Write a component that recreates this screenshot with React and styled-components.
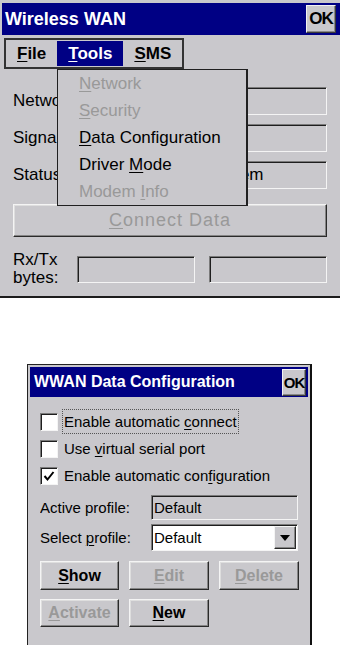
import React from 'react';
import styled, { createGlobalStyle } from 'styled-components';

const GRAY = '#c9c8cc';
const NAVY = '#000084';
const DISABLED = '#999999';

const GlobalStyle = createGlobalStyle`
  html, body {
    margin: 0;
    padding: 0;
    background: #fff;
  }
  body {
    font-family: "Liberation Sans", Arial, sans-serif;
    color: #000;
  }
  #root {
    width: 340px;
    height: 645px;
    overflow: hidden;
  }
`;

const Screen = styled.div`
  width: 340px;
  height: 645px;
  display: flex;
  flex-direction: column;
  background: #fff;
`;

const MainWindow = styled.div`
  position: relative;
  box-sizing: border-box;
  height: 298px;
  padding: 3px 0 0 2px;
  background: ${GRAY};
  border-bottom: 2px solid #1c1c1c;
  display: flex;
  flex-direction: column;
`;

const DialogWindow = styled.div`
  box-sizing: border-box;
  flex: 1;
  width: 285px;
  margin: 66px 0 0 27px;
  padding: 2px 2px 0 2px;
  background: ${GRAY};
  border-left: 1px solid #222;
  border-top: 1px solid #222;
  border-right: 2px solid #111;
  display: flex;
  flex-direction: column;
`;

const TitleBar = styled.div`
  display: flex;
  align-items: center;
  justify-content: space-between;
  flex-shrink: 0;
  height: ${p => p.$h}px;
  padding: ${p => p.$pad};
  background: ${NAVY};
  color: #fff;
  font-weight: bold;
  font-size: ${p => p.$size}px;
`;

const OkButton = styled.div`
  box-sizing: border-box;
  width: ${p => p.$w}px;
  height: ${p => p.$h}px;
  display: flex;
  align-items: center;
  justify-content: center;
  background: ${GRAY};
  color: #000;
  border: 1px solid;
  border-color: #f2f2f2 #3a3a3a #3a3a3a #f2f2f2;
  box-shadow: inset -1px -1px 0 #8a8a8a;
  font-weight: bold;
  font-size: ${p => p.$size}px;
  letter-spacing: -1px;
`;

const MenuBar = styled.div`
  align-self: flex-start;
  box-sizing: border-box;
  display: flex;
  align-items: center;
  height: 31px;
  margin: 3px 0 0 2px;
  border: 2px solid #333;
  font-weight: bold;
  font-size: 17px;
`;

const MenuItem = styled.div`
  height: 25px;
  display: flex;
  align-items: center;
  padding: 0 11px;
  background: ${p => (p.$active ? NAVY : 'transparent')};
  color: ${p => (p.$active ? '#fff' : '#000')};
`;

const Key = styled.span`
  text-decoration: underline;
  text-underline-offset: 2px;
  text-decoration-thickness: 1px;
`;

const Dropdown = styled.div`
  position: absolute;
  left: 57px;
  top: 69px;
  width: 191px;
  box-sizing: border-box;
  background: ${GRAY};
  border: 1px solid #202020;
  border-right-width: 2px;
  z-index: 5;
`;

const DropItem = styled.div`
  height: 27px;
  display: flex;
  align-items: center;
  padding-left: 21px;
  font-size: 17px;
  color: ${p => (p.$disabled ? DISABLED : '#000')};
`;

const Form = styled.div`
  display: flex;
  flex-direction: column;
  margin-top: 18px;
  padding: 0 13px 0 11px;
`;

const Fields = styled.div`
  display: flex;
  flex-direction: column;
  gap: 9px;
`;

const FieldRow = styled.div`
  display: flex;
  align-items: center;
  height: 28px;
`;

const FieldLabel = styled.div`
  width: ${p => p.$w}px;
  flex-shrink: 0;
  font-size: ${p => p.$size}px;
  white-space: nowrap;
  overflow: hidden;
`;

const TextBox = styled.div`
  box-sizing: border-box;
  flex: ${p => (p.$w ? 'none' : 1)};
  width: ${p => (p.$w ? `${p.$w}px` : 'auto')};
  height: ${p => p.$h}px;
  display: flex;
  align-items: center;
  padding-left: ${p => p.$pl || 3}px;
  background: ${p => (p.$white ? '#fff' : GRAY)};
  border: 1px solid;
  border-color: #7a7a7a #f4f4f4 #f4f4f4 #7a7a7a;
  box-shadow: inset 1px 1px 0 #1e1e1e;
  font-size: ${p => p.$size}px;
  white-space: nowrap;
  overflow: hidden;
`;

const RaisedButton = styled.div`
  box-sizing: border-box;
  height: ${p => p.$h}px;
  display: flex;
  align-items: center;
  justify-content: center;
  background: ${GRAY};
  border: 1px solid;
  border-color: #f4f4f4 #2a2a2a #2a2a2a #f4f4f4;
  box-shadow: inset -1px -1px 0 #858585, inset 1px 1px 0 #dedede;
  color: ${p => (p.$disabled ? DISABLED : '#000')};
  font-size: ${p => p.$size}px;
  font-weight: ${p => (p.$bold ? 'bold' : 'normal')};
  letter-spacing: ${p => p.$ls || 0}px;
`;

const ConnectWrap = styled.div`
  margin-top: 15px;
`;

const RxRow = styled.div`
  display: flex;
  align-items: center;
  margin-top: 14px;
  gap: 14px;
`;

const RxLabel = styled.div`
  width: 50px;
  font-size: 17px;
  line-height: 18px;
`;

const DialogBody = styled.div`
  display: flex;
  flex-direction: column;
  padding: 0 9px 0 10px;
`;

const CheckList = styled.div`
  display: flex;
  flex-direction: column;
  margin-top: 11px;
`;

const CheckRow = styled.div`
  display: flex;
  align-items: center;
  height: 27px;
  gap: 4px;
`;

const CheckBox = styled.div`
  box-sizing: border-box;
  width: 18px;
  height: 18px;
  display: flex;
  align-items: center;
  justify-content: center;
  background: #fff;
  border: 1px solid;
  border-color: #7a7a7a #f4f4f4 #f4f4f4 #7a7a7a;
  box-shadow: inset 1px 1px 0 #1e1e1e;
`;

const CheckText = styled.span`
  font-size: 15px;
  padding: 3px 1px;
  border: 1px dotted ${p => (p.$focus ? '#555' : 'transparent')};
`;

const ProfileRow = styled.div`
  display: flex;
  align-items: center;
  margin-top: ${p => p.$mt}px;
`;

const ComboArrow = styled.div`
  box-sizing: border-box;
  width: 22px;
  height: 23px;
  margin: 0 1px 0 auto;
  display: flex;
  align-items: center;
  justify-content: center;
  background: ${GRAY};
  border: 1px solid;
  border-color: #f4f4f4 #2a2a2a #2a2a2a #f4f4f4;
  box-shadow: inset -1px -1px 0 #858585;
`;

const ButtonGrid = styled.div`
  display: grid;
  grid-template-columns: 79px 80px 80px;
  grid-template-rows: 29px 28px;
  column-gap: 10px;
  row-gap: 9px;
  margin-top: 10px;
`;

const CheckMark = () => (
  <svg width="12" height="12" viewBox="0 0 12 12">
    <polyline points="1.5,6 4.5,9.5 10.5,2" fill="none" stroke="#000" strokeWidth="2" />
  </svg>
);

const DownArrow = () => (
  <svg width="10" height="6" viewBox="0 0 10 6">
    <polygon points="0,0 10,0 5,6" fill="#000" />
  </svg>
);

export default function App() {
  return (
    <>
      <GlobalStyle />
      <Screen>
        <MainWindow>
          <TitleBar $h={32} $pad="0 4px 0 3px" $size={18}>
            <span>Wireless WAN</span>
            <OkButton $w={30} $h={28} $size={17}>OK</OkButton>
          </TitleBar>

          <MenuBar>
            <MenuItem><span><Key>F</Key>ile</span></MenuItem>
            <MenuItem $active><span><Key>T</Key>ools</span></MenuItem>
            <MenuItem><span><Key>S</Key>MS</span></MenuItem>
          </MenuBar>

          <Form>
            <Fields>
              <FieldRow>
                <FieldLabel $w={83} $size={17}>Network:</FieldLabel>
                <TextBox $h={28} $size={17} />
              </FieldRow>
              <FieldRow>
                <FieldLabel $w={83} $size={17}>Signal:</FieldLabel>
                <TextBox $h={28} $size={17} />
              </FieldRow>
              <FieldRow>
                <FieldLabel $w={83} $size={17}>Status:</FieldLabel>
                <TextBox $h={28} $size={17} $pl={4}>Searching for modem</TextBox>
              </FieldRow>
            </Fields>

            <ConnectWrap>
              <RaisedButton $h={33} $size={18} $ls={1} $disabled>
                <span><Key>C</Key>onnect Data</span>
              </RaisedButton>
            </ConnectWrap>

            <RxRow>
              <RxLabel>Rx/Tx<br />bytes:</RxLabel>
              <TextBox $w={118} $h={27} $size={17} />
              <TextBox $w={118} $h={27} $size={17} />
            </RxRow>
          </Form>

          <Dropdown>
            <DropItem $disabled><span><Key>N</Key>etwork</span></DropItem>
            <DropItem $disabled><span><Key>S</Key>ecurity</span></DropItem>
            <DropItem><span><Key>D</Key>ata Configuration</span></DropItem>
            <DropItem><span>Driver <Key>M</Key>ode</span></DropItem>
            <DropItem $disabled><span>Modem <Key>I</Key>nfo</span></DropItem>
          </Dropdown>
        </MainWindow>

        <DialogWindow>
          <TitleBar $h={30} $pad="0 2px 0 4px" $size={16}>
            <span>WWAN Data Configuration</span>
            <OkButton $w={24} $h={27} $size={15}>OK</OkButton>
          </TitleBar>

          <DialogBody>
            <CheckList>
              <CheckRow>
                <CheckBox />
                <CheckText $focus>Enable automatic <Key>c</Key>onnect</CheckText>
              </CheckRow>
              <CheckRow>
                <CheckBox />
                <CheckText>Use <Key>v</Key>irtual serial port</CheckText>
              </CheckRow>
              <CheckRow>
                <CheckBox><CheckMark /></CheckBox>
                <CheckText>Enable automatic con<Key>f</Key>iguration</CheckText>
              </CheckRow>
            </CheckList>

            <ProfileRow $mt={6}>
              <FieldLabel $w={111} $size={15}>Active profile:</FieldLabel>
              <TextBox $w={147} $h={25} $size={15} $pl={2}>Default</TextBox>
            </ProfileRow>
            <ProfileRow $mt={4}>
              <FieldLabel $w={111} $size={15}>Select <Key>p</Key>rofile:</FieldLabel>
              <TextBox $w={147} $h={27} $size={15} $pl={2} $white>
                Default
                <ComboArrow><DownArrow /></ComboArrow>
              </TextBox>
            </ProfileRow>

            <ButtonGrid>
              <RaisedButton $h={29} $size={16} $bold><span><Key>S</Key>how</span></RaisedButton>
              <RaisedButton $h={29} $size={16} $bold $disabled><span><Key>E</Key>dit</span></RaisedButton>
              <RaisedButton $h={29} $size={16} $bold $disabled><span><Key>D</Key>elete</span></RaisedButton>
              <RaisedButton $h={28} $size={16} $bold $disabled><span><Key>A</Key>ctivate</span></RaisedButton>
              <RaisedButton $h={28} $size={16} $bold><span><Key>N</Key>ew</span></RaisedButton>
            </ButtonGrid>
          </DialogBody>
        </DialogWindow>
      </Screen>
    </>
  );
}
